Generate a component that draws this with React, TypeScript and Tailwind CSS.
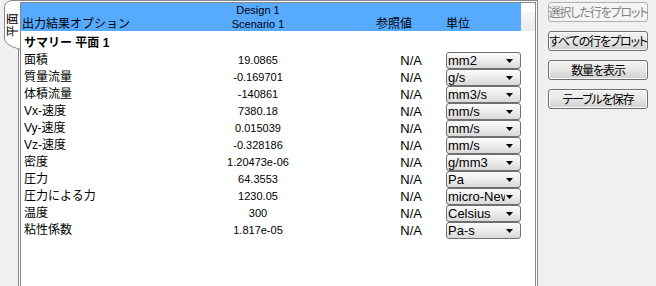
const ROWS: readonly (readonly [string, string, string])[] = [
  ["面積", "19.0865", "mm2"],
  ["質量流量", "-0.169701", "g/s"],
  ["体積流量", "-140861", "mm3/s"],
  ["Vx-速度", "7380.18", "mm/s"],
  ["Vy-速度", "0.015039", "mm/s"],
  ["Vz-速度", "-0.328186", "mm/s"],
  ["密度", "1.20473e-06", "g/mm3"],
  ["圧力", "64.3553", "Pa"],
  ["圧力による力", "1230.05", "micro-Newton"],
  ["温度", "300", "Celsius"],
  ["粘性係数", "1.817e-05", "Pa-s"],
];

const BUTTONS = [
  { label: "選択した行をプロット", disabled: true },
  { label: "すべての行をプロット", disabled: false },
  { label: "数量を表示", disabled: false },
  { label: "テーブルを保存", disabled: false },
];

function SideTab() {
  return (
    <div className="absolute left-[3px] top-0 z-10 h-[50px] w-[17px]">
      <svg width="17" height="50" viewBox="0 0 17 50" className="absolute inset-0">
        <path
          d="M17 49.5 C11 47 1.5 45 1.5 38 L1.5 8 C1.5 3.5 4 1.5 9 0.5 L17 0.5"
          fill="#ffffff"
          stroke="#828790"
          strokeWidth="1"
        />
      </svg>
      <div className="absolute inset-0 flex items-center justify-center">
        <span className="-rotate-90 whitespace-nowrap font-['Noto_Sans_CJK_JP',sans-serif] text-[12px] leading-none">
          平面
        </span>
      </div>
    </div>
  );
}

function UnitSelect({ value }: { readonly value: string }) {
  return (
    <div className="relative flex h-[17px] w-[75px] items-center rounded-[3px] border border-[#707070] bg-gradient-to-b from-[#fbfbfb] via-[#ececec] to-[#d9d9d9]">
      <span className="w-[58px] overflow-hidden whitespace-nowrap pl-px font-['Liberation_Sans',sans-serif] text-[13px] leading-[15px]">
        {value}
      </span>
      <svg width="7" height="4" viewBox="0 0 7 4" className="absolute right-[7px] top-[6px]">
        <polygon points="0,0 7,0 3.5,4" fill="#000000" />
      </svg>
    </div>
  );
}

export default function App() {
  return (
    <div className="flex h-[286px] w-[656px] overflow-hidden bg-[#f0f0f0] font-['Liberation_Sans','Noto_Sans_CJK_JP',sans-serif] text-black">
      <div className="relative w-[18px] shrink-0">
        <SideTab />
      </div>

      <div className="h-[300px] w-[520px] shrink-0 border border-[#828790] bg-white p-px">
        <div className="h-full border border-[#828790] bg-white">
          <div className="flex h-[28px]">
            <div className="flex w-[500px] items-end bg-[#56aaff] leading-[14px]">
              <div className="w-[179px] pl-px text-[12px]">出力結果オプション</div>
              <div className="w-[116px] text-center text-[11px]">
                <div>Design 1</div>
                <div>Scenario 1</div>
              </div>
              <div className="w-[107px] pl-[60px] text-[12px]">参照値</div>
              <div className="pl-[23px] text-[12px]">単位</div>
            </div>
            <div className="flex flex-1 flex-col">
              <div className="h-[9px] bg-white" />
              <div className="flex-1 bg-gradient-to-b from-[#f7f7f7] to-[#ebebeb]" />
            </div>
          </div>

          <div className="mt-[4px] h-[17px] pl-[3px] text-[12px] font-bold leading-[17px]">
            サマリー 平面 1
          </div>

          {ROWS.map(([label, value, unit]) => (
            <div key={label} className="flex h-[17px] items-center">
              <div className="w-[179px] pl-[3px] text-[12px] leading-[17px]">{label}</div>
              <div className="w-[116px] text-center text-[11px] leading-[17px]">{value}</div>
              <div className="w-[107px] pr-px text-right text-[13px] leading-[17px]">N/A</div>
              <div className="pl-[23px]">
                <UnitSelect value={unit} />
              </div>
            </div>
          ))}
        </div>
      </div>

      <div className="ml-[10px] mt-[2px] flex w-[100px] shrink-0 flex-col gap-[9px] font-['Noto_Sans_CJK_JP',sans-serif]">
        {BUTTONS.map((b) => (
          <div
            key={b.label}
            className={
              b.disabled
                ? "flex h-[20px] items-center justify-center whitespace-nowrap rounded-[3px] border border-[#adb2b5] bg-[#f4f4f4] text-[12px] leading-[18px] tracking-[-1.1px] text-[#838383] [font-feature-settings:'palt']"
                : "flex h-[20px] items-center justify-center whitespace-nowrap rounded-[3px] border border-[#707070] bg-gradient-to-b from-[#f2f2f2] via-[#e6e6e6] to-[#d0d0d0] text-[12px] leading-[18px] tracking-[-1.1px] shadow-[inset_0_0_0_1px_#fcfcfc] [font-feature-settings:'palt']"
            }
          >
            {b.label}
          </div>
        ))}
      </div>
    </div>
  );
}
